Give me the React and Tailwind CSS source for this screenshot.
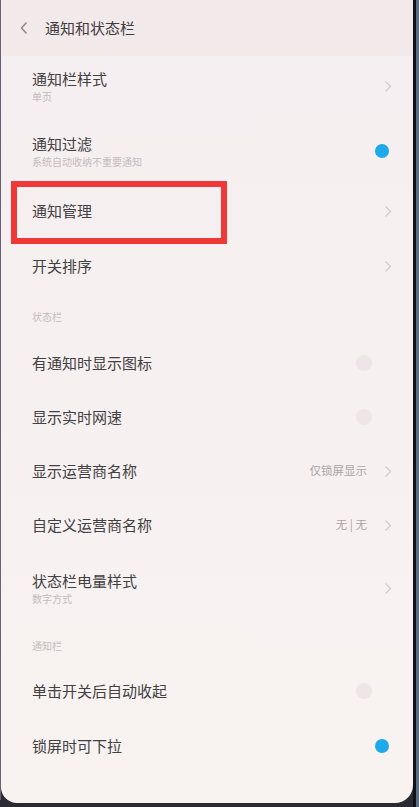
import React from "react";

const font = { fontFamily: '"Noto Sans CJK SC", "Noto Sans", sans-serif' };

function Chevron() {
  return (
    <svg width="8" height="13" viewBox="0 0 8 13" className="shrink-0">
      <polyline points="1.5,1.5 6.5,6.5 1.5,11.5" fill="none" stroke="#d2cccd" strokeWidth="1.3" />
    </svg>
  );
}

function Toggle({ on }) {
  return (
    <div className="-mr-[2px] flex w-[40px] items-center justify-start shrink-0">
      {on ? (
        <div className="ml-[21px] h-[14px] w-[14px] rounded-full bg-[#1ea9ea]" />
      ) : (
        <div className="ml-[2px] h-[16px] w-[16px] rounded-full bg-[#ede5e7]" />
      )}
    </div>
  );
}

function Row({ title, sub, h, right }) {
  return (
    <div className={`flex items-center pl-[31px] pr-[21px] ${h}`}>
      <div className="flex flex-1 flex-col">
        <span className="text-[15px] leading-[20px] text-[#424042]">{title}</span>
        {sub && <span className="mt-[1px] text-[10px] leading-[14px] text-[#c2bcbd]">{sub}</span>}
      </div>
      {right}
    </div>
  );
}

function Section({ label, h }) {
  return (
    <div className={`flex items-center pl-[31px] ${h}`}>
      <span className="text-[10px] text-[#c4bebf]">{label}</span>
    </div>
  );
}

function Value({ text }) {
  return (
    <div className="flex items-center gap-[17px]">
      <span className="text-[11.5px] text-[#aaa5a6]">{text}</span>
      <Chevron />
    </div>
  );
}

export default function App() {
  return (
    <div className="relative flex h-[807px] w-[419px] overflow-hidden bg-[#2a2a33]" style={font}>
      <div className="w-[1px] h-[800px] bg-[#6d5d75]" />
      <div className="flex h-[803px] w-[412px] flex-col overflow-hidden rounded-bl-[16px] rounded-br-[18px] bg-gradient-to-b from-[#f6eff1] via-[#f7f0f1] to-[#f8f3f1]">
        <div className="flex h-[56px] items-center bg-[#f2e9eb] pl-[18px]">
          <svg width="10" height="14" viewBox="0 0 10 14" className="mr-[16px]">
            <polyline points="7.5,1.5 2.5,7 7.5,12.5" fill="none" stroke="#8a8486" strokeWidth="1.4" />
          </svg>
          <span className="text-[15px] text-[#3f3c3e]">通知和状态栏</span>
        </div>
        <Row title="通知栏样式" sub="单页" h="h-[60px]" right={<Chevron />} />
        <Row title="通知过滤" sub="系统自动收纳不重要通知" h="h-[70px]" right={<Toggle on />} />
        <Row title="通知管理" h="h-[50px]" right={<Chevron />} />
        <Row title="开关排序" h="h-[60px]" right={<Chevron />} />
        <Section label="状态栏" h="h-[40px]" />
        <Row title="有通知时显示图标" h="h-[54px]" right={<Toggle />} />
        <Row title="显示实时网速" h="h-[54px]" right={<Toggle />} />
        <Row title="显示运营商名称" h="h-[54px]" right={<Value text="仅锁屏显示" />} />
        <Row title="自定义运营商名称" h="h-[54px]" right={<Value text="无 | 无" />} />
        <Row title="状态栏电量样式" sub="数字方式" h="h-[72px]" right={<Chevron />} />
        <Section label="通知栏" h="h-[42px]" />
        <Row title="单击开关后自动收起" h="h-[50px]" right={<Toggle />} />
        <Row title="锁屏时可下拉" h="h-[60px]" right={<Toggle on />} />
      </div>
      <div className="h-[807px] w-[3px] bg-[#111118]" />
      <div className="h-[807px] w-[3px] bg-[#5f6d82]" />
      <div className="absolute left-[11px] top-[181px] h-[63px] w-[216px] border-[6px] border-[#f03838]" />
    </div>
  );
}
